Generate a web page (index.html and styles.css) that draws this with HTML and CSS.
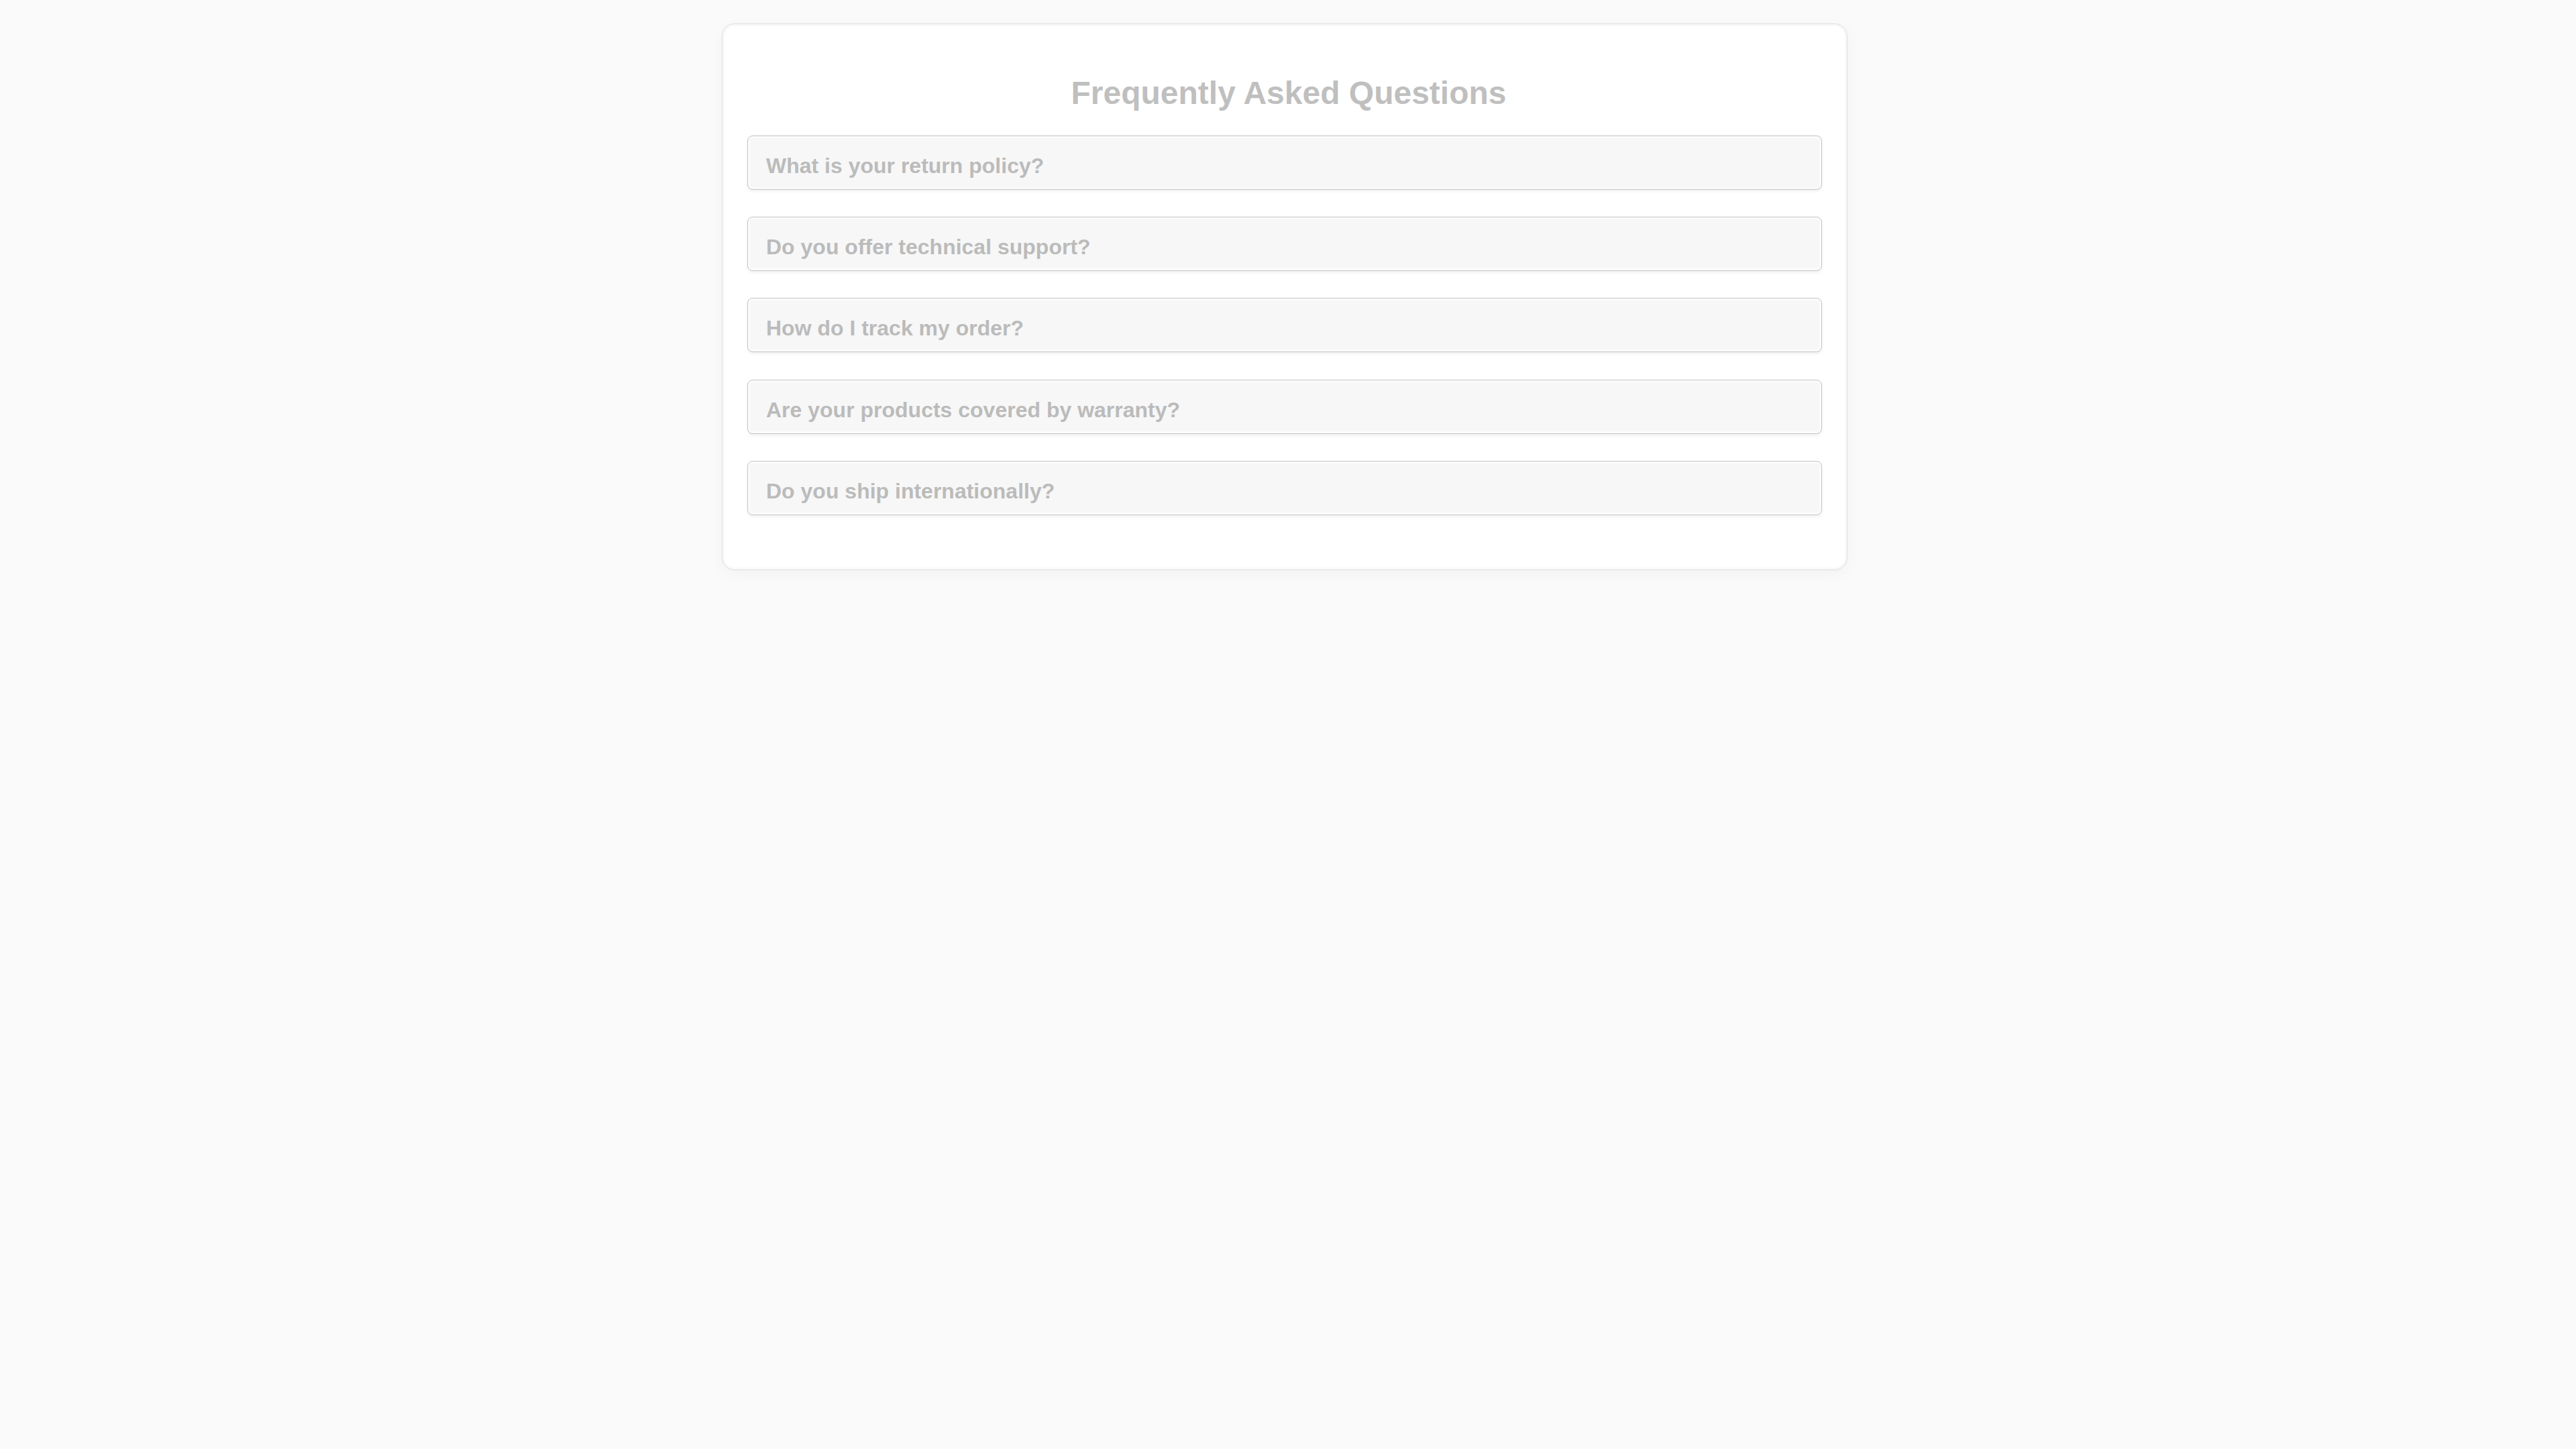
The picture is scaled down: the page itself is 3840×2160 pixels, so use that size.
FILE: index.html
```html
<!DOCTYPE html>
<html lang="en">
<head>
<meta charset="utf-8">
<title>FAQ</title>
<link rel="stylesheet" href="styles.css">
</head>
<body>
<div class="page">
  <section class="card">
    <h2 class="title">Frequently Asked Questions</h2>
    <div class="list">
      <div class="item">What is your return policy?</div>
      <div class="item">Do you offer technical support?</div>
      <div class="item">How do I track my order?</div>
      <div class="item">Are your products covered by warranty?</div>
      <div class="item">Do you ship internationally?</div>
    </div>
  </section>
</div>
</body>
</html>
```

FILE: styles.css
```css
html, body {
  margin: 0;
  padding: 0;
  background: #fafafa;
  height: 100%;
}
body {
  font-family: "Liberation Sans", Arial, sans-serif;
}
.page {
  padding: 35px 10px 0 0;
}
.card {
  box-sizing: border-box;
  width: 1678px;
  margin: 0 auto;
  background: #ffffff;
  border: 1px solid #dedede;
  border-radius: 19px;
  box-shadow: inset 0 0 0 3px #f9f9f9, 0 6px 22px rgba(0, 0, 0, 0.035);
  padding: 0 37px 81px;
}
.title {
  margin: 75px 0 36px;
  padding-left: 12px;
  font-size: 48px;
  line-height: 55px;
  font-weight: 700;
  color: #bfbfbf;
  text-align: center;
}
.list {
  display: flex;
  flex-direction: column;
  gap: 40.2px;
}
.item {
  box-sizing: border-box;
  height: 81px;
  padding: 26px 24px 0 27px;
  background: #f7f7f7;
  border: 1px solid #c4c4c4;
  border-radius: 8px;
  box-shadow: inset 0 0 0 3px #fbfbfb, 0 3px 4px rgba(0, 0, 0, 0.05);
  font-size: 32px;
  line-height: 37px;
  font-weight: 700;
  color: #bbbbbb;
}
```
